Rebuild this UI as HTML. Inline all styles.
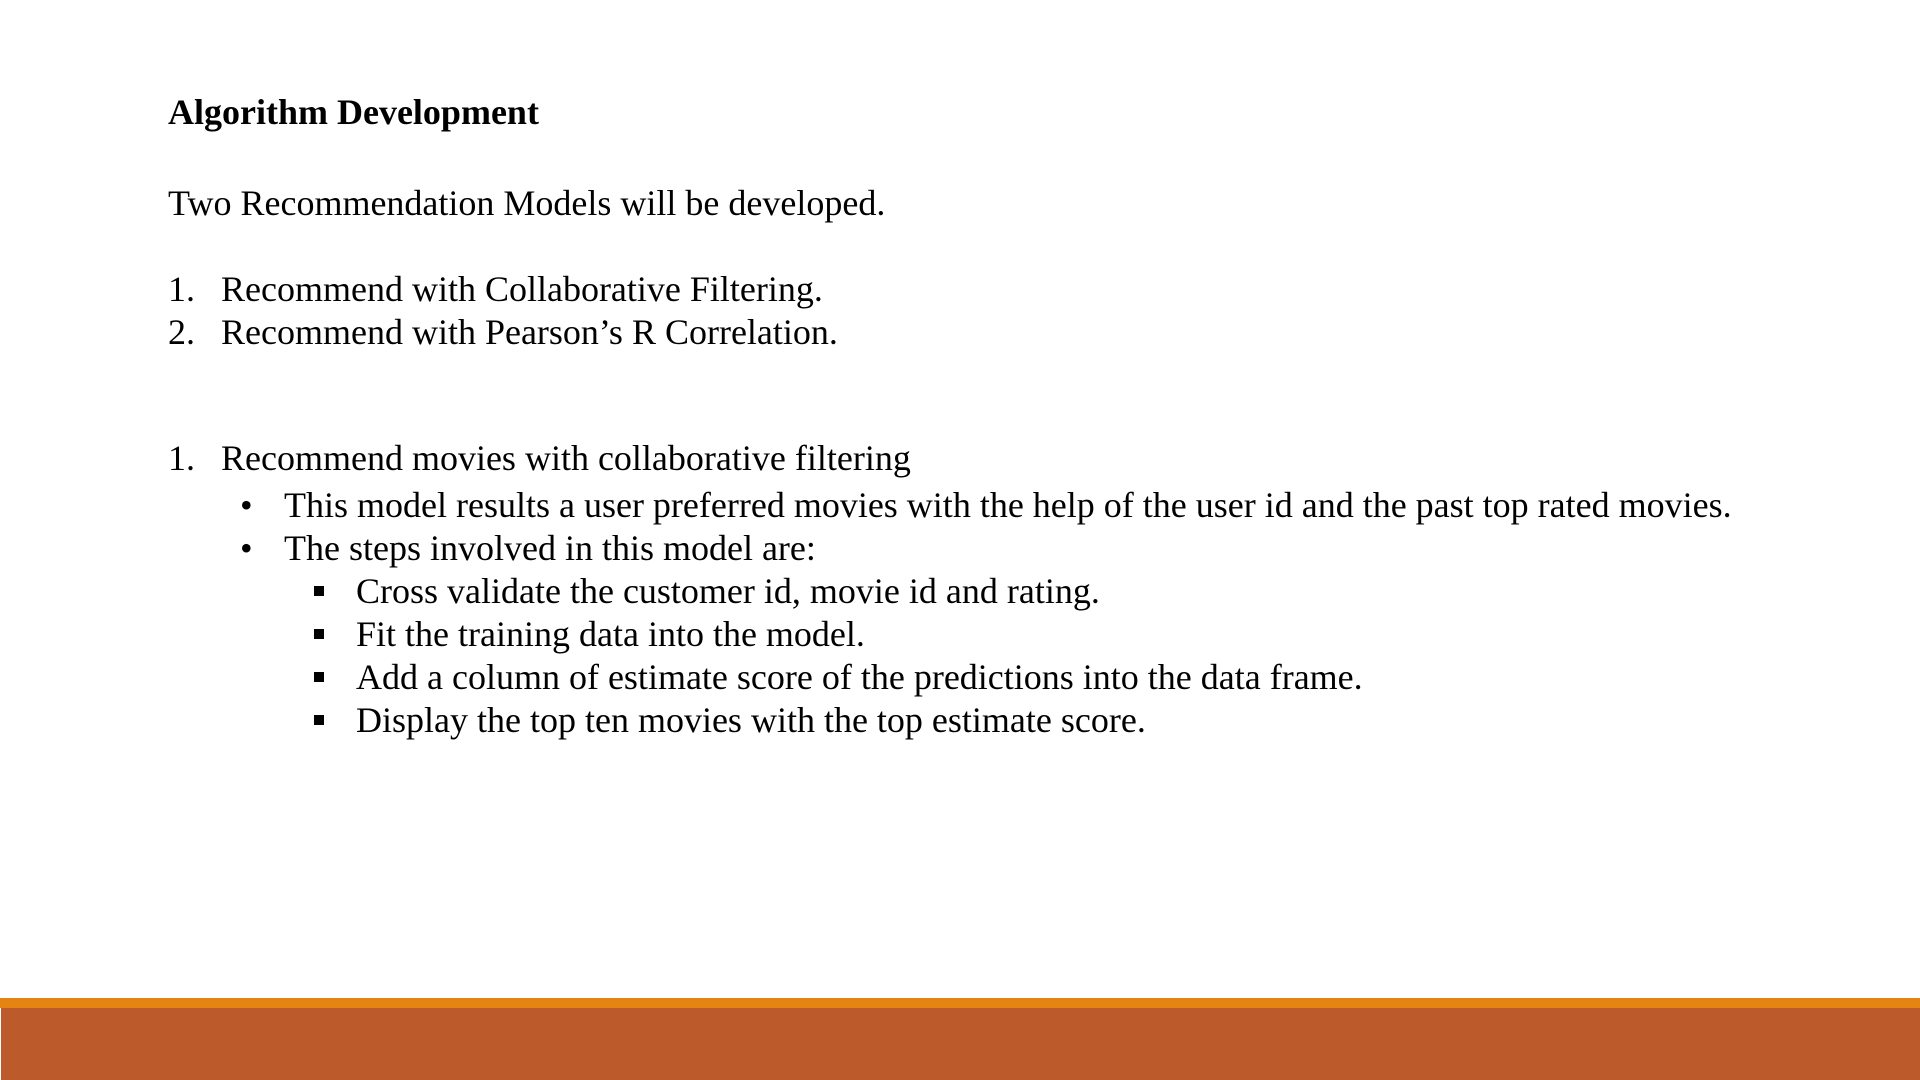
<!DOCTYPE html>
<html><head><meta charset="utf-8"><style>
html,body{margin:0;padding:0;background:#fff;width:1920px;height:1080px;overflow:hidden;position:relative}
.t{position:absolute;font-family:"Liberation Serif",serif;font-size:36px;line-height:36px;color:#000;white-space:nowrap}
.b{font-weight:bold}
.sq{position:absolute;width:10px;height:10px;background:#000}
</style></head><body>
<div class="t b" style="left:168px;top:94px">Algorithm Development</div>
<div class="t" style="left:168px;top:185px">Two Recommendation Models will be developed.</div>
<div class="t" style="left:168px;top:271px">1.</div><div class="t" style="left:221px;top:271px">Recommend with Collaborative Filtering.</div>
<div class="t" style="left:168px;top:314px">2.</div><div class="t" style="left:221px;top:314px">Recommend with Pearson’s R Correlation.</div>
<div class="t" style="left:168px;top:440px">1.</div><div class="t" style="left:221px;top:440px">Recommend movies with collaborative filtering</div>
<div class="t" style="left:240px;top:487px">•</div><div class="t" style="left:284px;top:487px">This model results a user preferred movies with the help of the user id and the past top rated movies.</div>
<div class="t" style="left:240px;top:530px">•</div><div class="t" style="left:284px;top:530px">The steps involved in this model are:</div>
<div class="sq" style="left:314px;top:586px"></div><div class="t" style="left:356px;top:573px">Cross validate the customer id, movie id and rating.</div>
<div class="sq" style="left:314px;top:629px"></div><div class="t" style="left:356px;top:616px">Fit the training data into the model.</div>
<div class="sq" style="left:314px;top:672px"></div><div class="t" style="left:356px;top:659px">Add a column of estimate score of the predictions into the data frame.</div>
<div class="sq" style="left:314px;top:715px"></div><div class="t" style="left:356px;top:702px">Display the top ten movies with the top estimate score.</div>
<div style="position:absolute;left:0;top:998px;width:1920px;height:10px;background:#e58412"></div>
<div style="position:absolute;left:1px;top:1008px;width:1919px;height:72px;background:#bd5a2c"></div>
</body></html>
